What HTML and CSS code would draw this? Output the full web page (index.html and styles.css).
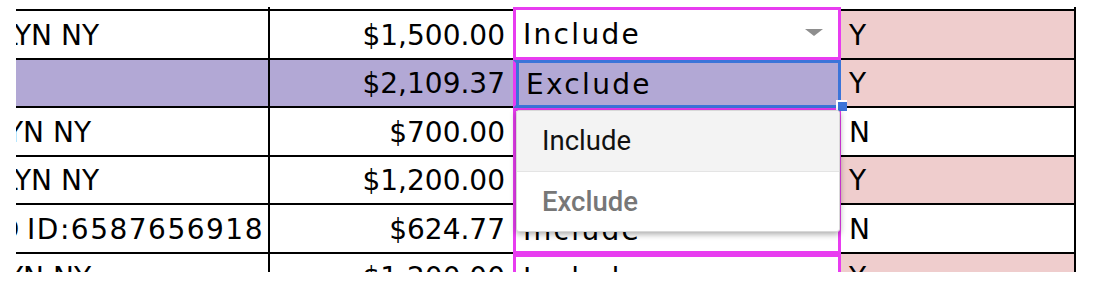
FILE: index.html
```html
<!DOCTYPE html>
<html>
<head>
<meta charset="utf-8">
<link rel="stylesheet" href="styles.css">
</head>
<body>
<div class="stage">
  <div class="sheet">
    <div class="cell a r0"></div>
    <div class="cell b r0"></div>
    <div class="cell c r0c"></div>
    <div class="cell d r0"></div>

    <div class="cell a"><span class="ta1">BROOKLYN NY</span></div>
    <div class="cell b">$1,500.00</div>
    <div class="cell c first"><span>Include</span><i class="arrow"></i></div>
    <div class="cell d pink">Y</div>

    <div class="cell a lav"></div>
    <div class="cell b lav">$2,109.37</div>
    <div class="cell c sel"><span>Exclude</span></div>
    <div class="cell d pink">Y</div>

    <div class="cell a"><span class="ta2">BROOKLYN NY</span></div>
    <div class="cell b">$700.00</div>
    <div class="cell c"><span>Include</span><i class="arrow"></i></div>
    <div class="cell d">N</div>

    <div class="cell a"><span class="ta1">BROOKLYN NY</span></div>
    <div class="cell b">$1,200.00</div>
    <div class="cell c"><span>Include</span><i class="arrow"></i></div>
    <div class="cell d pink">Y</div>

    <div class="cell a"><span class="ta3">REFUND ID:6587656918</span></div>
    <div class="cell b">$624.77</div>
    <div class="cell c"><span>Include</span><i class="arrow"></i></div>
    <div class="cell d">N</div>

    <div class="cell a"><span class="ta2">BROOKLYN NY</span></div>
    <div class="cell b">$1,200.00</div>
    <div class="cell c"><span>Include</span><i class="arrow"></i></div>
    <div class="cell d pink">Y</div>
  </div>

  <div class="handle"></div>

  <div class="menu">
    <div class="item hover">Include</div>
    <div class="item muted">Exclude</div>
  </div>
</div>
</body>
</html>
```

FILE: styles.css
```css
* { box-sizing: border-box; }

body {
  margin: 0;
  background: #fff;
}

.stage {
  position: relative;
  width: 1102px;
  height: 298px;
  overflow: hidden;
}

.sheet {
  margin: 7px 0 0 16px;
  width: 1060px;
  height: 265px;
  overflow: hidden;
  display: grid;
  grid-template-columns: 254px 243px 328px 235px;
  grid-template-rows: 4px repeat(6, 48.5px);
  font-family: "DejaVu Sans", sans-serif;
  font-size: 28px;
  line-height: 28px;
  color: #000;
}

.cell {
  display: flex;
  align-items: center;
  padding-top: 3px;
  border-bottom: 2px solid #000;
  overflow: hidden;
  white-space: nowrap;
  min-width: 0;
}

.a {
  border-right: 2px solid #000;
  justify-content: flex-end;
}

.ta1 { margin-right: 169px; }
.ta2 { margin-right: 177px; }
.ta3 { margin-right: 4px; letter-spacing: 1.5px; word-spacing: -4px; }

.b {
  justify-content: flex-end;
  padding-right: 8px;
}

.c {
  border: 3px solid #e83cf0;
  justify-content: space-between;
  padding-left: 7px;
  padding-right: 15px;
  letter-spacing: 2.3px;
}

.c.first { border-top: 0; }

.d {
  border-right: 2px solid #000;
  padding-left: 8px;
}

.r0 { padding: 0; }

.r0c {
  padding: 0;
  border: 3px solid #e83cf0;
  border-bottom: 0;
}

.lav { background: #b2a8d5; }
.pink { background: #efcdcd; }

.sel {
  background: #b2a8d5;
  border-color: #3b74d9;
  border-left-color: #e83cf0;
  box-shadow: inset 3px 0 0 #3b74d9;
  padding-left: 10px;
}

.arrow {
  flex: none;
  width: 0;
  height: 0;
  border-left: 9px solid transparent;
  border-right: 9px solid transparent;
  border-top: 7px solid #8e8e8e;
  margin-top: -6px;
}

.handle {
  position: absolute;
  left: 836px;
  top: 100px;
  width: 11px;
  height: 11px;
  background: #3b74d9;
  border-top: 2px solid #fff;
  border-left: 2px solid #fff;
}

.menu {
  position: absolute;
  left: 516px;
  top: 110px;
  width: 324px;
  height: 122px;
  background: #fff;
  border: 1px solid #d8d8d8;
  border-radius: 3px;
  box-shadow: 0 2px 6px rgba(0, 0, 0, 0.35);
  overflow: hidden;
  font-family: Roboto, "Noto Sans", sans-serif;
  font-size: 27.5px;
  display: flex;
  flex-direction: column;
}

.item {
  flex: 1;
  display: flex;
  align-items: center;
  padding-left: 25px;
}

.item.hover {
  background: #f3f3f3;
  color: #111;
  border-bottom: 1px solid #e4e4e4;
}

.item.muted {
  color: #777;
  font-weight: 500;
}
```
